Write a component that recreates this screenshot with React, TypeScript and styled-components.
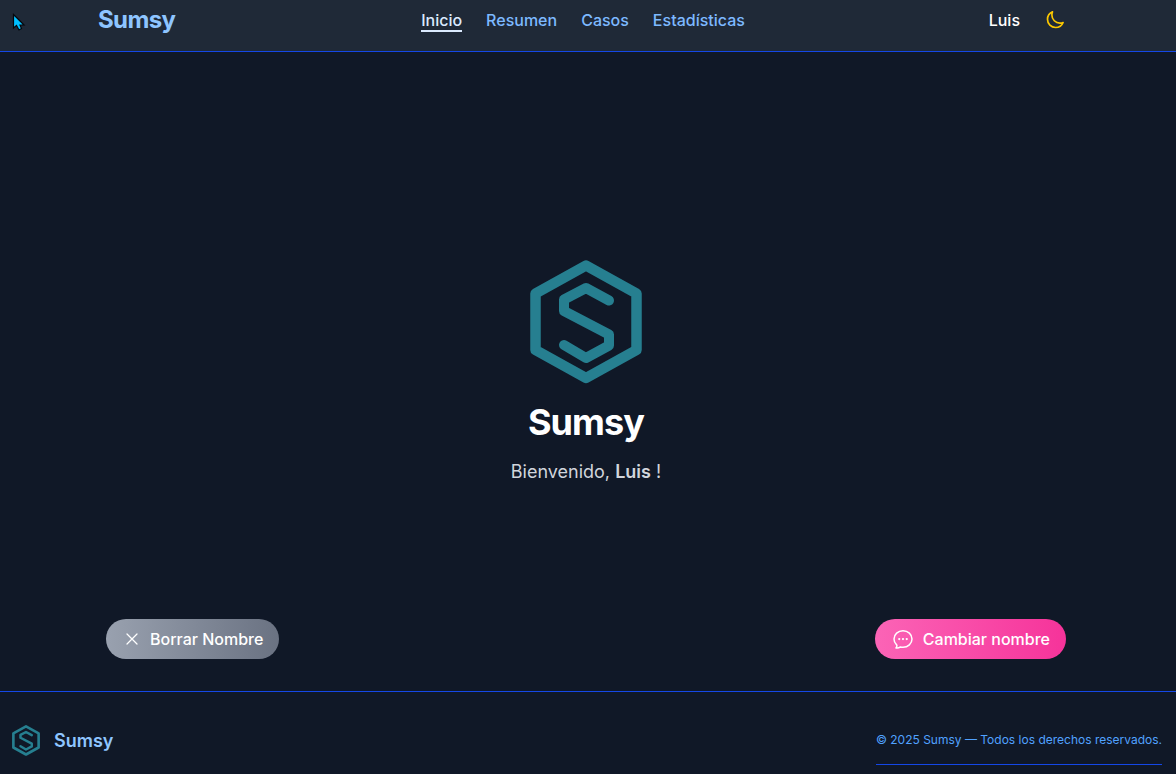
import React from "react";
import styled, { createGlobalStyle } from "styled-components";

const GlobalStyle = createGlobalStyle`
  *, *::before, *::after { box-sizing: border-box; }
  html, body { margin: 0; background: #101827; }
  body { font-family: Inter, "Liberation Sans", sans-serif; font-size: 16px; line-height: 24px; color: #fff; }
  h1, p { margin: 0; }
  a { color: inherit; text-decoration: none; }
  button { font: inherit; color: inherit; border: 0; cursor: pointer; }
`;

const Page = styled.div`
  display: flex;
  flex-direction: column;
  min-height: 100vh;
`;

const Header = styled.header`
  height: 52px;
  padding: 0 108px 0 98px;
  background: #1f2937;
  border-bottom: 1px solid #1447e6;
  display: grid;
  grid-template-columns: 1fr auto 1fr;
  align-items: start;
`;

const Brand = styled.a`
  color: #8ec5ff;
  font-size: 24px;
  line-height: 40px;
  font-weight: 700;
  letter-spacing: -0.025em;
`;

const Nav = styled.nav`
  display: flex;
  gap: 24px;
  padding-top: 8px;
`;

const NavLink = styled.a<{ $active?: boolean }>`
  height: 24px;
  font-weight: 500;
  color: ${(p) => (p.$active ? "#dbeafe" : "#7db9ff")};
  border-bottom: ${(p) => (p.$active ? "2px solid #dbeafe" : "0")};
`;

const UserArea = styled.div`
  display: flex;
  justify-content: flex-end;
  align-items: center;
  gap: 22px;
  padding-top: 8px;
  font-weight: 500;
`;

const ThemeButton = styled.button`
  display: flex;
  padding: 2px 3px;
  background: none;
  color: #fcc800;
`;

const Pointer = styled.svg`
  position: absolute;
  left: 12px;
  top: 13px;
`;

const Main = styled.main`
  flex: 1;
  display: flex;
  flex-direction: column;
`;

const Hero = styled.section`
  flex: 1;
  display: flex;
  flex-direction: column;
  align-items: center;
  justify-content: flex-end;
  padding: 0 4px 133px 0;
`;

const Title = styled.h1`
  margin-top: 18px;
  font-size: 36px;
  line-height: 40px;
  font-weight: 700;
  letter-spacing: -0.025em;
`;

const Welcome = styled.p`
  margin-top: 16px;
  font-size: 18px;
  line-height: 28px;
  color: #d1d5dc;
`;

const Name = styled.strong`
  font-weight: 600;
`;

const Actions = styled.div`
  display: flex;
  justify-content: space-between;
  padding: 0 110px 32px 106px;
`;

const ActionButton = styled.button<{ $from: string; $to: string }>`
  display: flex;
  align-items: center;
  gap: 8px;
  height: 40px;
  padding: 0 16px;
  border-radius: 20px;
  font-weight: 500;
  background: linear-gradient(to right, ${(p) => p.$from}, ${(p) => p.$to});
`;

const Footer = styled.footer`
  height: 83px;
  padding: 0 14px 0 12px;
  border-top: 1px solid #1447e6;
  display: flex;
  justify-content: space-between;
`;

const FooterBrand = styled.a`
  display: flex;
  align-items: center;
  gap: 14px;
  height: 97px;
  font-size: 18px;
  font-weight: 600;
  color: #8ec5ff;
`;

const Copyright = styled.p`
  height: 73px;
  padding-top: 38px;
  font-size: 12px;
  line-height: 20px;
  color: #51a2ff;
  border-bottom: 1px solid #1447e6;
`;

const Logo = ({ width, height }: { width: number; height: number }) => (
  <svg width={width} height={height} viewBox="0 0 112 124" fill="none" stroke="#267f90" strokeLinejoin="round" strokeLinecap="round" aria-hidden="true">
    <path strokeWidth="10.5" d="M56 5.5 106.5 33.5V90L56 118 5.5 90V33.5Z" />
    <path strokeWidth="10" d="M79 40.5 56 28 34 39.5V51L79 74.500V85.500L56 98 34 85" />
  </svg>
);

interface IconProps {
  d: string;
  size?: number;
  weight?: number;
}

const Icon = ({ d, size = 24, weight = 1.5 }: IconProps) => (
  <svg width={size} height={size} viewBox="0 0 24 24" fill="none" stroke="currentColor" strokeWidth={weight} strokeLinecap="round" strokeLinejoin="round" aria-hidden="true">
    <path d={d} />
  </svg>
);

const MOON =
  "M21.752 15.002A9.72 9.72 0 0 1 18 15.75c-5.385 0-9.75-4.365-9.75-9.75 0-1.33.266-2.597.748-3.752A9.753 9.753 0 0 0 3 11.25C3 16.635 7.365 21 12.75 21a9.753 9.753 0 0 0 9.002-5.998Z";
const CLOSE = "M6 18 18 6M6 6l12 12";
const CHAT =
  "M8.625 12a.375.375 0 1 1-.75 0 .375.375 0 0 1 .75 0Zm0 0H8.25m4.125 0a.375.375 0 1 1-.75 0 .375.375 0 0 1 .75 0Zm0 0H12m4.125 0a.375.375 0 1 1-.75 0 .375.375 0 0 1 .75 0Zm0 0h-.375M21 12c0 4.556-4.03 8.25-9 8.25a9.764 9.764 0 0 1-2.555-.337A5.972 5.972 0 0 1 5.41 20.97a5.969 5.969 0 0 1-.474-.065 4.48 4.48 0 0 0 .978-2.025c.09-.457-.133-.901-.467-1.226C3.93 16.178 3 14.189 3 12c0-4.556 4.03-8.25 9-8.25s9 3.694 9 8.25Z";

export default function App() {
  return (
    <Page>
      <GlobalStyle />
      <Header>
        <Brand href="#">Sumsy</Brand>
        <Nav aria-label="Principal">
          <NavLink href="#inicio" $active aria-current="page">Inicio</NavLink>
          <NavLink href="#resumen">Resumen</NavLink>
          <NavLink href="#casos">Casos</NavLink>
          <NavLink href="#estadisticas">Estadísticas</NavLink>
        </Nav>
        <UserArea>
          <span>Luis</span>
          <ThemeButton type="button" aria-label="Cambiar tema">
            <Icon d={MOON} size={20} weight={2} />
          </ThemeButton>
        </UserArea>
      </Header>
      <Main>
        <Hero>
          <Logo width={112} height={124} />
          <Title>Sumsy</Title>
          <Welcome>
            Bienvenido, <Name>Luis</Name> !
          </Welcome>
        </Hero>
        <Actions>
          <ActionButton type="button" $from="#99a1af" $to="#6a7282">
            <Icon d={CLOSE} size={20} />
            Borrar Nombre
          </ActionButton>
          <ActionButton type="button" $from="#fb64b6" $to="#f6339a">
            <Icon d={CHAT} />
            Cambiar nombre
          </ActionButton>
        </Actions>
      </Main>
      <Footer>
        <FooterBrand href="#">
          <Logo width={28} height={31} />
          Sumsy
        </FooterBrand>
        <Copyright>© 2025 Sumsy — Todos los derechos reservados.</Copyright>
      </Footer>
      <Pointer width="14" height="19" viewBox="0 0 14 19" aria-hidden="true">
        <path d="M1.500 1.500V15L4.500 12.500 7 17 9.500 15.500 8 12H12Z" fill="#00bfff" stroke="#05070c" strokeWidth="1.200" />
      </Pointer>
    </Page>
  );
}
